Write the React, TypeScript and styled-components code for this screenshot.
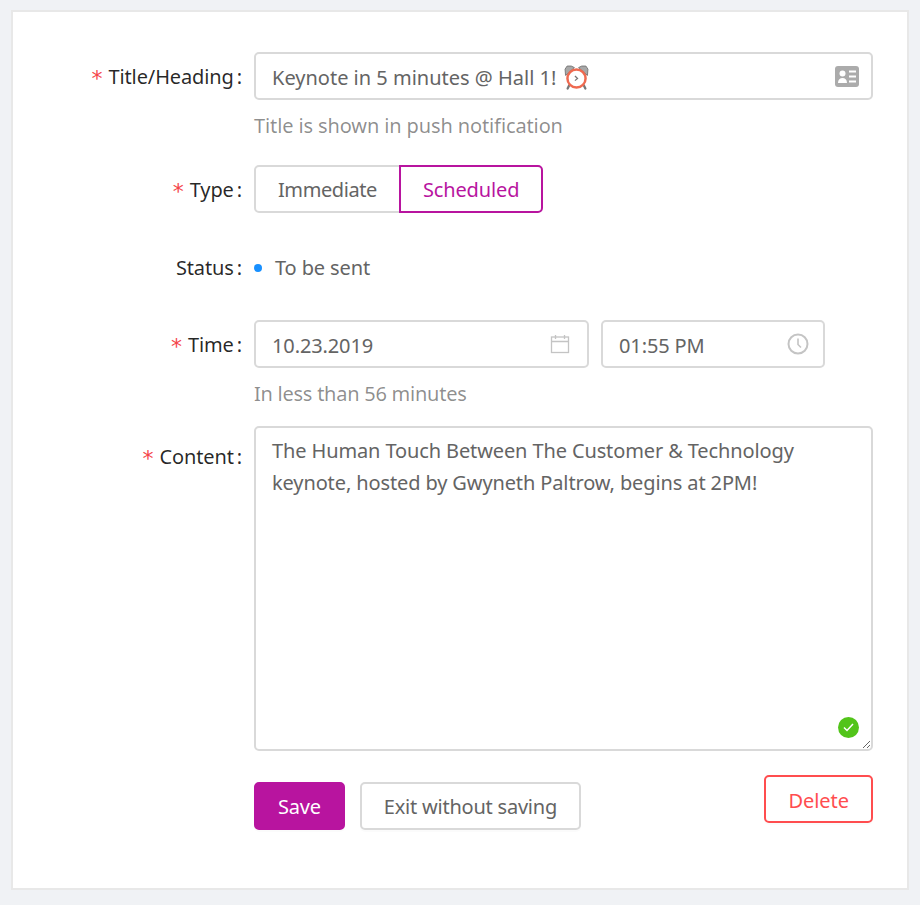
import styled, { createGlobalStyle } from 'styled-components';

const brand = '#b8149f';
const danger = '#ff4d4f';
const line = '#d9d9d9';
const textColor = '#646464';
const fontStack = '"Noto Sans", "Open Sans", "Liberation Sans", sans-serif';

const GlobalStyle = createGlobalStyle`
  html, body {
    margin: 0;
    padding: 0;
    background: #f0f2f5;
  }
  * {
    box-sizing: border-box;
  }
`;

const Page = styled.div`
  width: 920px;
  height: 905px;
  padding: 10px 11px 15px;
  font-family: ${fontStack};
  font-size: 20px;
  letter-spacing: -0.12px;
  color: ${textColor};
`;

const Card = styled.div`
  height: 880px;
  background: #fff;
  border: 2px solid #e8e8e8;
  padding: 40px 34px 0 0;
`;

const Row = styled.div<{ $gap?: number }>`
  display: grid;
  grid-template-columns: 229px 1fr;
  column-gap: 12px;
  margin-bottom: ${(p) => p.$gap ?? 0}px;
`;

const Label = styled.div<{ $height?: number }>`
  display: flex;
  justify-content: flex-end;
  align-items: center;
  height: ${(p) => p.$height ?? 48}px;
  color: rgba(0, 0, 0, 0.85);
  white-space: nowrap;
`;

const Star = styled.span`
  color: #f5454a;
  margin-right: 6px;
  font-size: 22px;
  font-family: "DejaVu Sans", sans-serif;
  line-height: 1;
  position: relative;
  top: 3px;
`;

const Colon = styled.span`
  margin-left: 3px;
`;

const Field = styled.div<{ $width?: number; $end?: number }>`
  display: flex;
  align-items: center;
  justify-content: space-between;
  width: ${(p) => (p.$width ? `${p.$width}px` : '100%')};
  height: 48px;
  padding: 0 ${(p) => p.$end ?? 12}px 0 16px;
  background: #fff;
  border: 2px solid ${line};
  border-radius: 5px;
  white-space: nowrap;
`;

const FieldText = styled.span`
  display: inline-flex;
  align-items: center;
  padding-top: 2px;
`;

const TitleText = styled(FieldText)`
  gap: 8px;
  letter-spacing: 0;
`;

const Help = styled.div<{ $tight?: boolean }>`
  height: 58px;
  padding-top: 11px;
  line-height: 30px;
  letter-spacing: ${(p) => (p.$tight ? '-0.25px' : 'inherit')};
  color: rgba(0, 0, 0, 0.45);
`;

const Segments = styled.div`
  display: flex;
`;

const Segment = styled.button<{ $active?: boolean; $first?: boolean }>`
  height: 48px;
  padding: 0 22px;
  margin-left: ${(p) => (p.$first ? 0 : -2)}px;
  font: inherit;
  letter-spacing: ${(p) => (p.$active ? '-0.12px' : '-0.42px')};
  background: #fff;
  color: ${(p) => (p.$active ? brand : textColor)};
  border: 2px solid ${(p) => (p.$active ? brand : line)};
  border-radius: ${(p) => (p.$first ? '5px 0 0 5px' : '0 5px 5px 0')};
  position: relative;
  z-index: ${(p) => (p.$active ? 1 : 0)};
`;

const StatusValue = styled.div`
  display: flex;
  align-items: center;
  gap: 13px;
  height: 48px;
`;

const Dot = styled.span`
  width: 8px;
  height: 8px;
  margin-top: 2px;
  border-radius: 50%;
  background: #1890ff;
`;

const TimeRow = styled.div`
  display: flex;
  gap: 12px;
`;

const AreaWrap = styled.div`
  position: relative;
  display: flex;
`;

const Area = styled.textarea`
  width: 100%;
  height: 325px;
  padding: 7px 16px;
  font: inherit;
  letter-spacing: inherit;
  line-height: 32px;
  color: ${textColor};
  background: #fff;
  border: 2px solid ${line};
  border-radius: 5px;
  outline: none;
  resize: vertical;
`;

const Valid = styled.span`
  position: absolute;
  right: 14px;
  bottom: 13px;
  width: 21px;
  height: 21px;
  display: flex;
  align-items: center;
  justify-content: center;
  border-radius: 50%;
  background: #52c41a;
`;

const Actions = styled.div`
  display: flex;
  align-items: flex-start;
  gap: 15px;
  margin-top: 24px;
`;

const Button = styled.button<{ $kind?: 'primary' | 'danger' }>`
  height: 48px;
  padding: 0 22px;
  font: inherit;
  letter-spacing: -0.22px;
  white-space: nowrap;
  border-radius: 5px;
  border: 2px solid
    ${(p) => (p.$kind === 'primary' ? brand : p.$kind === 'danger' ? danger : line)};
  background: ${(p) => (p.$kind === 'primary' ? brand : '#fff')};
  color: ${(p) =>
    p.$kind === 'primary' ? '#fff' : p.$kind === 'danger' ? danger : textColor};
  box-shadow: 0 2px 0 rgba(0, 0, 0, 0.015);
`;

const LowerButton = styled(Button)`
  margin-top: 7px;
`;

const DeleteButton = styled(Button)`
  margin-left: auto;
  padding-top: 2px;
  letter-spacing: -0.05px;
`;

const ContactIcon = () => (
  <svg width="24" height="21" viewBox="0 0 24 21">
    <rect x="0" y="0" width="24" height="21" rx="3" fill="#ababab" />
    <circle cx="7.500" cy="7.500" r="3" fill="#fff" />
    <path d="M3 17c0-3.200 2-5 4.500-5s4.500 1.800 4.500 5z" fill="#fff" />
    <path d="M14 5.500h7M14 10.500h7M14 15.500h7" stroke="#fff" strokeWidth="2" />
  </svg>
);

const AlarmIcon = () => (
  <svg width="25" height="25" viewBox="0 0 24 24">
    <path d="M1.500 10 1 4 3 1h4l3 1.500z" fill="#a8a8a8" stroke="#6e6e6e" strokeWidth="0.800" />
    <path d="M22.500 10 23 4 21 1h-4l-3 1.500z" fill="#a8a8a8" stroke="#6e6e6e" strokeWidth="0.800" />
    <path d="M5 19.500 3.500 22.500M19 19.500l1.500 3" stroke="#777" strokeWidth="2.200" strokeLinecap="round" />
    <circle cx="12" cy="13" r="8.700" fill="#fff" stroke="#ef6a50" strokeWidth="2.400" />
    <path d="M10.500 10.500 13 13l-2.500 2" fill="none" stroke="#777" strokeWidth="1.200" />
  </svg>
);

const CalendarIcon = () => (
  <svg width="20" height="20" viewBox="0 0 20 20" fill="none" stroke="#c4c4c4" strokeWidth="1.300">
    <rect x="1.500" y="3" width="17" height="15.500" />
    <path d="M1.500 7.500h17M5.500 1v4M14.500 1v4" />
  </svg>
);

const ClockIcon = () => (
  <svg width="22" height="22" viewBox="0 0 22 22" fill="none" stroke="#c4c4c4" strokeWidth="2">
    <circle cx="11" cy="11" r="9.500" />
    <path d="M11 5.500V11.500l3 3" strokeWidth="1.600" />
  </svg>
);

const CheckIcon = () => (
  <svg width="11" height="9" viewBox="0 0 11 9" fill="none" stroke="#fff" strokeWidth="1.500">
    <path d="M1 4.500 4 7.500 10 1" />
  </svg>
);

export default function App() {
  return (
    <Page>
      <GlobalStyle />
      <Card>
        <Row $gap={7}>
          <Label>
            <Star>*</Star>Title/Heading<Colon>:</Colon>
          </Label>
          <div>
            <Field>
              <TitleText>
                Keynote in 5 minutes @ Hall 1! <AlarmIcon />
              </TitleText>
              <ContactIcon />
            </Field>
            <Help>Title is shown in push notification</Help>
          </div>
        </Row>
        <Row $gap={30}>
          <Label>
            <Star>*</Star>Type<Colon>:</Colon>
          </Label>
          <Segments>
            <Segment $first>Immediate</Segment>
            <Segment $active>Scheduled</Segment>
          </Segments>
        </Row>
        <Row $gap={29}>
          <Label>
            Status<Colon>:</Colon>
          </Label>
          <StatusValue>
            <Dot />
            To be sent
          </StatusValue>
        </Row>
        <Row>
          <Label>
            <Star>*</Star>Time<Colon>:</Colon>
          </Label>
          <div>
            <TimeRow>
              <Field $width={335} $end={17}>
                <FieldText>10.23.2019</FieldText>
                <CalendarIcon />
              </Field>
              <Field $width={224} $end={14}>
                <FieldText>01:55 PM</FieldText>
                <ClockIcon />
              </Field>
            </TimeRow>
            <Help $tight>In less than 56 minutes</Help>
          </div>
        </Row>
        <Row>
          <Label $height={60}>
            <Star>*</Star>Content<Colon>:</Colon>
          </Label>
          <div>
            <AreaWrap>
              <Area
                readOnly
                value={'The Human Touch Between The Customer & Technology keynote, hosted by Gwyneth Paltrow, begins at 2PM!'}
              />
              <Valid>
                <CheckIcon />
              </Valid>
            </AreaWrap>
            <Actions>
              <LowerButton $kind="primary">Save</LowerButton>
              <LowerButton>Exit without saving</LowerButton>
              <DeleteButton $kind="danger">Delete</DeleteButton>
            </Actions>
          </div>
        </Row>
      </Card>
    </Page>
  );
}
